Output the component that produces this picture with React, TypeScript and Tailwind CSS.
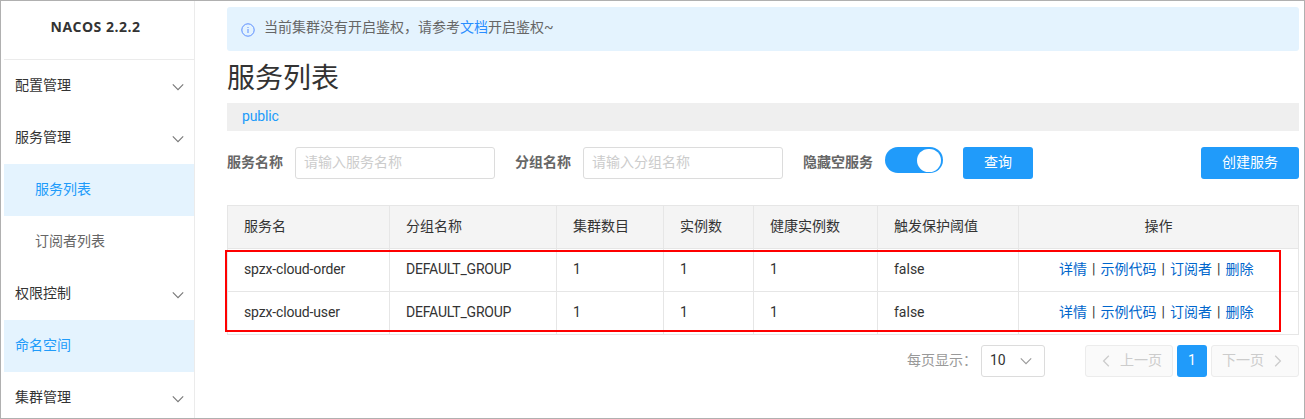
import React from "react";

type IconProps = { className?: string };

const ChevronDown = ({ className }: IconProps) => (
  <svg viewBox="0 0 12 12" className={className} fill="none" stroke="currentColor" strokeWidth="1.1">
    <path d="M0.8 3.3 6 8.6l5.2-5.3" />
  </svg>
);

const ChevronSide = ({ className }: IconProps) => (
  <svg viewBox="0 0 12 12" className={className} fill="none" stroke="currentColor" strokeWidth="1.3">
    <path d="M8.8 0.8 3.6 6l5.2 5.2" />
  </svg>
);

const InfoIcon = ({ className }: IconProps) => (
  <svg viewBox="0 0 14 14" className={className} fill="none" stroke="currentColor">
    <circle cx="7" cy="7" r="6.2" strokeWidth="1" />
    <path d="M7 6v4M7 4v1" strokeWidth="1" />
  </svg>
);

type MenuItem = { label: string; sub?: boolean; active?: boolean; arrow?: boolean };

const menu: MenuItem[] = [
  { label: "配置管理", arrow: true },
  { label: "服务管理", arrow: true },
  { label: "服务列表", sub: true, active: true },
  { label: "订阅者列表", sub: true },
  { label: "权限控制", arrow: true },
  { label: "命名空间", active: true },
  { label: "集群管理", arrow: true },
];

const Sidebar = () => (
  <aside className="ml-[3px] flex w-[191px] shrink-0 flex-col border-r border-[#ebebeb]">
    <h1 className="flex h-[59px] shrink-0 items-center justify-center border-b border-[#ebebeb] pb-[7px] pr-[7px] font-['Open_Sans'] text-[14px] font-bold tracking-[0.5px] text-[#333]">
      NACOS 2.2.2
    </h1>
    <ul>
      {menu.map((m) => (
        <li
          key={m.label}
          className={`flex h-[52px] items-center justify-between pr-[10px] ${m.sub ? "pl-[31px]" : "pl-[11px]"} ${
            m.active ? "bg-[#e4f3fe] text-[#209bfa]" : m.sub ? "text-[#666]" : "text-[#333]"
          }`}
        >
          <span className="pb-[2px]">{m.label}</span>
          {m.arrow && <ChevronDown className="mt-px h-3 w-3 text-[#777]" />}
        </li>
      ))}
    </ul>
  </aside>
);

const Field = ({ label, placeholder }: { label: string; placeholder: string }) => (
  <label className="mr-5 flex items-center">
    <span className="mr-3 pb-[2px] font-bold text-[#666]">{label}</span>
    <input
      placeholder={placeholder}
      className="h-8 w-[200px] rounded-[3px] border border-[#dcdcdc] px-2 pb-[2px] outline-none placeholder:text-[#ccc]"
    />
  </label>
);

const columns = ["服务名", "分组名称", "集群数目", "实例数", "健康实例数", "触发保护阈值"];
const rows = [
  ["spzx-cloud-order", "DEFAULT_GROUP", "1", "1", "1", "false"],
  ["spzx-cloud-user", "DEFAULT_GROUP", "1", "1", "1", "false"],
];
const actions = ["详情", "示例代码", "订阅者", "删除"];

const ServiceTable = () => (
  <div className="relative mt-[26px]">
    <table className="w-[1072px] table-fixed border-separate border-spacing-0 border-l border-t border-[#e6e6e6] text-left text-[#333]">
      <colgroup>
        <col className="w-[162px]" />
        <col className="w-[167px]" />
        <col className="w-[107px]" />
        <col className="w-[90px]" />
        <col className="w-[124px]" />
        <col className="w-[141px]" />
        <col className="w-[280px]" />
      </colgroup>
      <thead>
        <tr className="h-[43px] bg-[#f4f4f4]">
          {columns.map((c) => (
            <th key={c} className="border-b border-r border-[#e6e6e6] p-0 pb-[2px] pl-4 font-normal">{c}</th>
          ))}
          <th className="border-b border-r border-[#e6e6e6] p-0 pb-[2px] text-center font-normal">操作</th>
        </tr>
      </thead>
      <tbody>
        {rows.map((r) => (
          <tr key={r[0]} className="h-[43px]">
            {r.map((cell, i) => (
              <td
                key={i}
                className={`border-b border-r border-[#e6e6e6] p-0 pb-[2px] pl-4 ${
                  i === 0 ? "tracking-[-0.15px]" : i === 1 ? "tracking-[-0.2px]" : ""
                }`}
              >
                {cell}
              </td>
            ))}
            <td className="border-b border-r border-[#e6e6e6] p-0 pb-[2px] pl-10">
              <div className="flex">
                {actions.map((a, i) => (
                  <React.Fragment key={a}>
                    {i > 0 && <span className="w-[13.5px] text-center">|</span>}
                    <a className="text-[#0066cc]">{a}</a>
                  </React.Fragment>
                ))}
              </div>
            </td>
          </tr>
        ))}
      </tbody>
    </table>
    <div className="pointer-events-none absolute -left-0.5 top-[45px] h-[82px] w-[1056px] border-2 border-[#fe0000]" />
  </div>
);

const Pagination = () => (
  <div className="mt-[10px] flex h-8 justify-end">
    <span className="flex items-center pb-[2px] text-[#999]">每页显示：</span>
    <button className="ml-1 flex w-16 items-center justify-between rounded-[3px] border border-[#dcdcdc] pl-[8px] pr-[12px] text-[#333]">
      <span className="pb-[2px]">10</span>
      <ChevronDown className="mb-px h-3 w-3 text-[#999]" />
    </button>
    <button className="ml-10 flex w-[88px] items-center justify-end rounded-[3px] border border-[#ececec] bg-[#fafafa] pr-[10px] text-[#ccc]">
      <ChevronSide className="mr-2 h-3 w-3" />
      <span className="pb-[2px]">上一页</span>
    </button>
    <button className="mx-1 w-[30px] rounded-[3px] bg-[#209bfa] pb-[2px] text-white">1</button>
    <button className="flex w-[88px] items-center rounded-[3px] border border-[#ececec] bg-[#fafafa] pl-[10px] text-[#ccc]">
      <span className="pb-[2px]">下一页</span>
      <ChevronSide className="ml-2 h-3 w-3 rotate-180" />
    </button>
  </div>
);

export default function App() {
  return (
    <div className="flex h-[419px] w-[1305px] overflow-hidden border border-[#b0b0b0] bg-white font-[Roboto,'Noto_Sans_CJK_SC',sans-serif] text-[14px] leading-5">
      <Sidebar />
      <main className="ml-8 w-[1072px] shrink-0 pt-[6px]">
        <div className="flex h-11 items-center rounded-[3px] bg-[#e4f3fe] pl-[14px]">
          <InfoIcon className="mt-[2px] h-[14px] w-[14px] text-[#5a8dff]" />
          <p className="ml-[9px] pb-[4px] text-[#666]">
            当前集群没有开启鉴权，请参考<a className="text-[#298dff]">文档</a>开启鉴权~
          </p>
        </div>
        <h2 className="flex h-[52px] items-center pt-[3px] text-[28px] leading-10 text-[#333]">服务列表</h2>
        <div className="flex h-7 items-center bg-[#efefef] pb-[2px] pl-[15px] tracking-[-0.15px] text-[#209bfa]">public</div>
        <form className="mt-4 flex h-8 items-center">
          <Field label="服务名称" placeholder="请输入服务名称" />
          <Field label="分组名称" placeholder="请输入分组名称" />
          <span className="pb-[2px] font-bold text-[#666]">隐藏空服务</span>
          <span className="mb-[6px] ml-3 flex h-[26px] w-[58px] items-center justify-end rounded-full bg-[#209bfa] pr-[2px]">
            <i className="h-[23px] w-6 rounded-full bg-white" />
          </span>
          <button type="button" className="ml-5 h-8 w-[70px] rounded-[3px] bg-[#209bfa] pb-[2px] text-white">查询</button>
          <button type="button" className="ml-auto h-8 w-[98px] rounded-[3px] bg-[#209bfa] pb-[2px] text-white">创建服务</button>
        </form>
        <ServiceTable />
        <Pagination />
      </main>
    </div>
  );
}
